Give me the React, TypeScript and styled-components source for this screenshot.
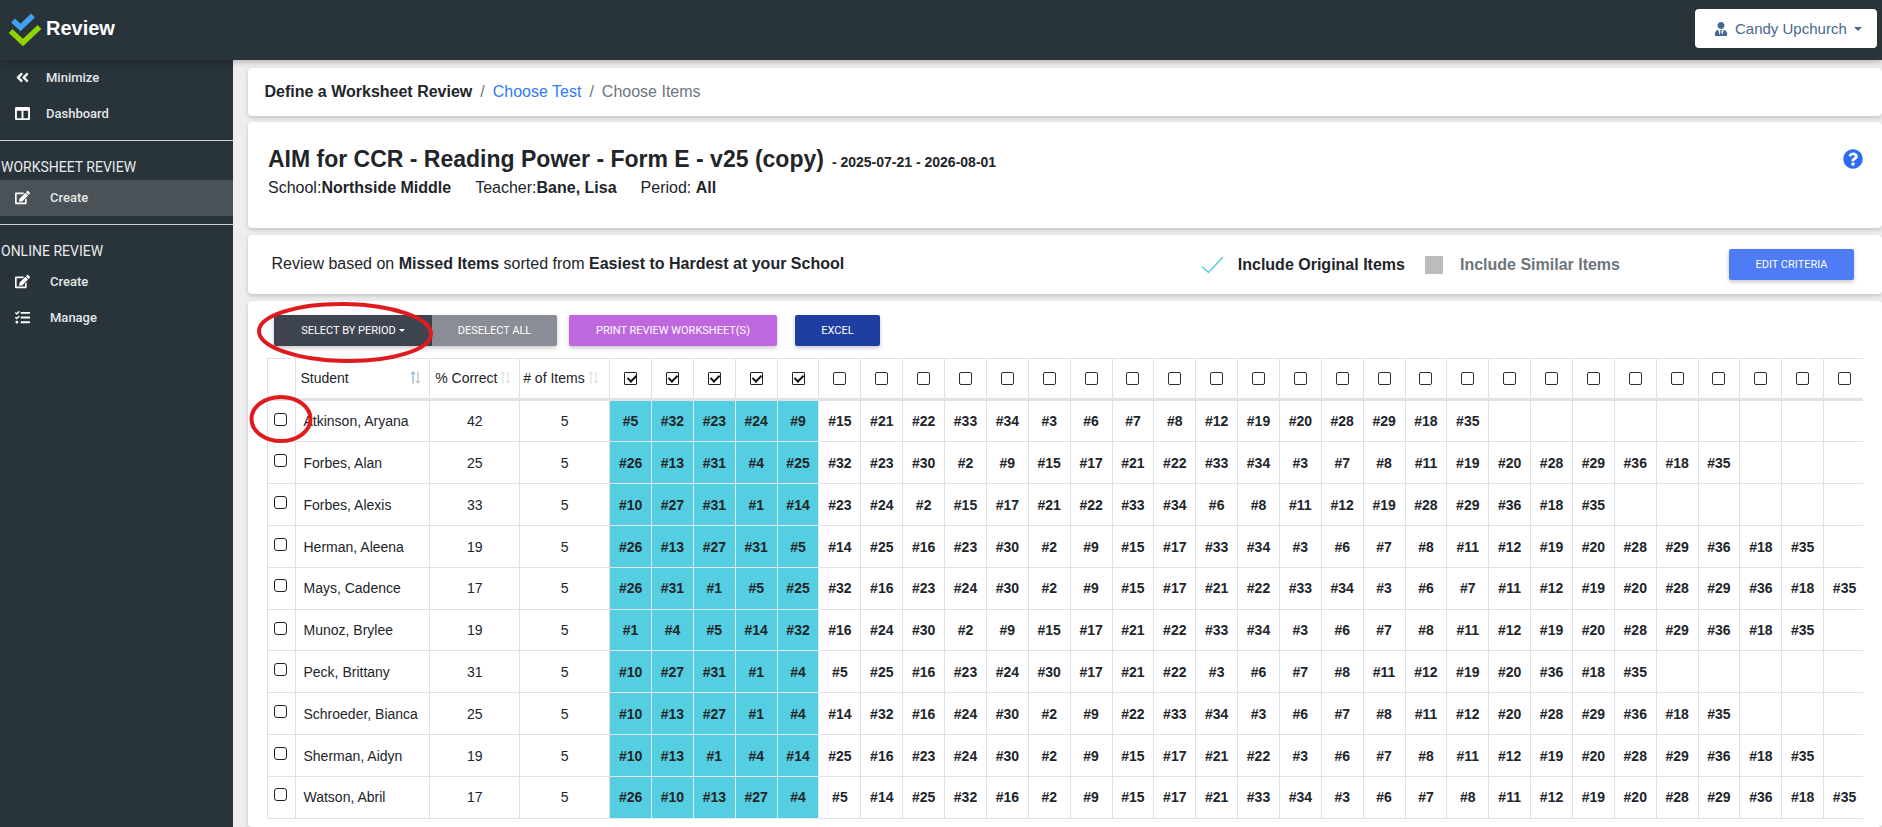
import React from "react";
import styled, { createGlobalStyle } from "styled-components";
import { FaAngleDoubleLeft, FaColumns, FaEdit, FaTasks, FaUserTie, FaQuestionCircle } from "react-icons/fa";

const Global = createGlobalStyle`
  html, body { margin: 0; height: 100%; overflow: hidden; background: #eeeeee; }
  body { font-family: "Liberation Sans", Arial, sans-serif; color: #212529; }
  * { box-sizing: border-box; }
`;

const Page = styled.div`
  display: flex;
  flex-direction: column;
  height: 100vh;
`;
const Header = styled.header`
  flex: 0 0 60px;
  background: #29333a;
  display: flex;
  align-items: center;
  justify-content: space-between;
  padding: 0 5px 3px 9px;
  box-shadow: 0 2px 6px rgba(0, 0, 0, 0.25);
  position: relative;
  z-index: 2;
`;
const Brand = styled.div`
  display: flex;
  align-items: center;
  gap: 4px;
  color: #fff;
  font-size: 20px;
  font-weight: 700;
`;
const UserButton = styled.button`
  width: 182px;
  height: 39px;
  background: #fff;
  border: 0;
  border-radius: 4px;
  color: #46698f;
  font: 15px "Liberation Sans", Arial, sans-serif;
  display: flex;
  align-items: center;
  padding: 0 0 0 19px;
  gap: 7px;
`;
const Caret = styled.span<{ $w?: number }>`
  display: inline-block;
  width: 0;
  height: 0;
  border-left: ${(p) => p.$w ?? 4}px solid transparent;
  border-right: ${(p) => p.$w ?? 4}px solid transparent;
  border-top: ${(p) => p.$w ?? 4}px solid currentColor;
`;
const Body = styled.div`
  flex: 1;
  display: flex;
  min-height: 0;
`;
const Sidebar = styled.nav`
  flex: 0 0 233px;
  background: #29333a;
  color: #e4e7e9;
  font-family: Roboto, "Liberation Sans", sans-serif;
  font-size: 13px;
  font-weight: 500;
`;
const NavItem = styled.div<{ $active?: boolean; $textLeft?: number }>`
  height: 36px;
  display: flex;
  align-items: center;
  padding: 0 0 2px 15px;
  background: ${(p) => (p.$active ? "#4a5258" : "transparent")};
  svg { width: 15px; height: 15px; color: #fff; flex: none; }
  span { margin-left: ${(p) => p.$textLeft ?? 16}px; }
`;
const NavRule = styled.hr`
  border: 0;
  border-top: 1px solid #c9cdd0;
  margin: 8px 0 0;
`;
const NavTitle = styled.div`
  height: 39px;
  padding: 12px 0 0 1px;
  font-size: 14px;
  font-weight: 400;
  display: flex;
  align-items: center;
  color: #e8eaec;
`;
const Main = styled.main`
  flex: 1;
  min-width: 0;
  padding: 8px 0 0 15px;
  display: flex;
  flex-direction: column;
  position: relative;
`;
const Card = styled.section<{ $h?: number; $mb?: number }>`
  background: #fff;
  border-radius: 4px;
  box-shadow: 0 2px 4px rgba(0, 0, 0, 0.18);
  ${(p) => (p.$h ? `flex: 0 0 ${p.$h}px;` : "flex: 1; min-height: 0;")}
  margin-bottom: ${(p) => p.$mb ?? 0}px;
`;
const Crumbs = styled(Card)`
  display: flex;
  align-items: center;
  padding-left: 16.5px;
  font-size: 16px;
  padding-bottom: 1px;
`;
const CrumbStrong = styled.b`
  font-weight: 700;
  color: #212529;
`;
const CrumbSep = styled.span`
  color: #6c757d;
  margin: 0 8px;
`;
const CrumbLink = styled.span`
  color: #2f7bf6;
`;
const CrumbMuted = styled.span`
  color: #6c757d;
`;
const TitleCard = styled(Card)`
  display: flex;
  justify-content: space-between;
  align-items: flex-start;
  padding: 24px 19px 0 20px;
`;
const TitleRow = styled.div`
  display: flex;
  align-items: baseline;
  gap: 8px;
  line-height: 26px;
`;
const PageTitle = styled.h1`
  margin: 0;
  font-size: 23px;
  font-weight: 700;
`;
const DateRange = styled.span`
  font-size: 14px;
  font-weight: 700;
`;
const MetaRow = styled.div`
  display: flex;
  gap: 24px;
  margin-top: 3px;
  font-size: 16px;
  line-height: 20px;
`;
const Help = styled.div`
  color: #2a6bf2;
  font-size: 20px;
  margin-top: 3px;
  line-height: 0;
`;
const CriteriaCard = styled(Card)`
  display: flex;
  align-items: center;
  padding: 0 28px 0 23.5px;
  font-size: 16px;
`;
const CriteriaText = styled.div`
  flex: 1;
  margin-bottom: 2px;
`;
const Include = styled.div<{ $muted?: boolean; $gap: number; $mr: number }>`
  display: flex;
  align-items: center;
  gap: ${(p) => p.$gap}px;
  margin-right: ${(p) => p.$mr}px;
  font-weight: 700;
  color: ${(p) => (p.$muted ? "#6c757d" : "#212529")};
`;
const GraySquare = styled.span`
  width: 18px;
  height: 18px;
  background: #bcbcbc;
`;
const ActionButton = styled.button<{ $bg: string; $w: number; $mr?: number; $radius?: string }>`
  width: ${(p) => p.$w}px;
  height: 31px;
  margin-right: ${(p) => p.$mr ?? 0}px;
  border: 0;
  border-radius: ${(p) => p.$radius ?? "2px"};
  background: ${(p) => p.$bg};
  color: #fff;
  font: 400 11px Roboto, "Liberation Sans", sans-serif;
  text-transform: uppercase;
  box-shadow: 0 2px 4px rgba(0, 0, 0, 0.22);
  display: inline-flex;
  align-items: center;
  justify-content: center;
  gap: 3px;
  padding: 0;
`;
const TableCard = styled(Card)`
  padding: 14px 0 0 19px;
  overflow: hidden;
`;
const Toolbar = styled.div`
  display: flex;
  padding-left: 7px;
  height: 31px;
  margin-bottom: 12px;
`;
const TableClip = styled.div`
  width: 1596px;
  overflow: hidden;
`;
const Grid = styled.table`
  table-layout: fixed;
  border-collapse: collapse;
  width: 1598.5px;
  font-size: 14px;
`;
const HeadCell = styled.th<{ $align?: string }>`
  height: 41px;
  padding: 0 0 2px ${(p) => (p.$align === "left" ? "5px" : "0")};
  border: 1px solid #dee2e6;
  border-bottom: 3px solid #dee2e6;
  font-weight: 400;
  text-align: ${(p) => p.$align ?? "center"};
  white-space: nowrap;
  overflow: hidden;
`;
const HeadInner = styled.div<{ $left: number; $right?: number; $spread?: boolean }>`
  display: flex;
  align-items: center;
  gap: 3px;
  justify-content: ${(p) => (p.$spread ? "space-between" : "flex-start")};
  padding: 0 ${(p) => p.$right ?? 0}px 0 ${(p) => p.$left}px;
`;
const Cell = styled.td<{ $align?: string; $kind?: "item" | "picked" }>`
  padding: 0;
  border: 1px solid ${(p) => (p.$kind === "picked" ? "#dcecf0" : "#dee2e6")};
  background: ${(p) => (p.$kind === "picked" ? "#54cee0" : "transparent")};
  font-weight: ${(p) => (p.$kind ? 700 : 400)};
  text-align: ${(p) => p.$align ?? "center"};
  white-space: nowrap;
`;
const NameCell = styled(Cell)`
  padding-left: 8px;
`;
const Row = styled.tr<{ $short?: boolean; $lift?: boolean }>`
  & > td {
    height: ${(p) => (p.$short ? 41 : 42)}px;
    padding-bottom: ${(p) => (p.$lift ? 2 : 0)}px;
  }
`;
const Box = styled.input`
  appearance: none;
  margin: 0;
  width: 13px;
  height: 13px;
  vertical-align: middle;
  border: 1.5px solid #2c2f34;
  border-radius: 2px;
  background: #fff;
  position: relative;
  &:checked {
    border-color: #1f2226;
    border-radius: 1px;
  }
  &:checked::after {
    content: "";
    position: absolute;
    left: 3.5px;
    top: 0;
    width: 4px;
    height: 7px;
    border: solid #111;
    border-width: 0 2px 2px 0;
    transform: rotate(45deg);
  }
`;
const RowBox = styled(Box)`
  top: -3px;
  left: -1px;
  border-width: 1px;
  border-color: #222;
  border-radius: 3px;
`;
const Annotation = styled.svg`
  position: absolute;
  left: 0;
  top: 0;
  pointer-events: none;
  overflow: visible;
  width: 100%;
  height: 100%;
`;

const Logo = () => (
  <svg width="33" height="34" viewBox="0 0 33 34" aria-hidden="true">
    <path d="M4 8.5l7.5 7L24 3.5" fill="none" stroke="#42a0f5" strokeWidth="5.5" strokeLinejoin="miter" />
    <path d="M1.5 19l12.5 11.5L30.5 15" fill="none" stroke="#8fd400" strokeWidth="5.5" strokeLinejoin="miter" />
  </svg>
);

const Tick = () => (
  <svg width="23" height="18" viewBox="0 0 23 18" aria-hidden="true">
    <path d="M1 10.5l6.5 6L22 1" fill="none" stroke="#54cee0" strokeWidth="1.5" />
  </svg>
);

const SortIcon = ({ active }: { active?: boolean }) => (
  <svg width="11" height="13" viewBox="0 0 11 13" aria-hidden="true" style={{ flex: "none" }}>
    <path d="M3 12.5V1M1 3.2L3 .8l2 2.4" fill="none" stroke={active ? "#5aa7cf" : "#d6d9dc"} strokeWidth="1" />
    <path d="M8 .5V12M6 9.8l2 2.4 2-2.4" fill="none" stroke={active ? "#a9b0b5" : "#d6d9dc"} strokeWidth="1" />
  </svg>
);

const students: { name: string; pct: number; items: number[]; short?: boolean; lift?: boolean }[] = [
  { name: "Atkinson, Aryana", pct: 42, items: [5, 32, 23, 24, 9, 15, 21, 22, 33, 34, 3, 6, 7, 8, 12, 19, 20, 28, 29, 18, 35] },
  { name: "Forbes, Alan", pct: 25, items: [26, 13, 31, 4, 25, 32, 23, 30, 2, 9, 15, 17, 21, 22, 33, 34, 3, 7, 8, 11, 19, 20, 28, 29, 36, 18, 35] },
  { name: "Forbes, Alexis", pct: 33, items: [10, 27, 31, 1, 14, 23, 24, 2, 15, 17, 21, 22, 33, 34, 6, 8, 11, 12, 19, 28, 29, 36, 18, 35] },
  { name: "Herman, Aleena", pct: 19, items: [26, 13, 27, 31, 5, 14, 25, 16, 23, 30, 2, 9, 15, 17, 33, 34, 3, 6, 7, 8, 11, 12, 19, 20, 28, 29, 36, 18, 35] },
  { name: "Mays, Cadence", pct: 17, lift: true, items: [26, 31, 1, 5, 25, 32, 16, 23, 24, 30, 2, 9, 15, 17, 21, 22, 33, 34, 3, 6, 7, 11, 12, 19, 20, 28, 29, 36, 18, 35] },
  { name: "Munoz, Brylee", pct: 19, short: true, items: [1, 4, 5, 14, 32, 16, 24, 30, 2, 9, 15, 17, 21, 22, 33, 34, 3, 6, 7, 8, 11, 12, 19, 20, 28, 29, 36, 18, 35] },
  { name: "Peck, Brittany", pct: 31, items: [10, 27, 31, 1, 4, 5, 25, 16, 23, 24, 30, 17, 21, 22, 3, 6, 7, 8, 11, 12, 19, 20, 36, 18, 35] },
  { name: "Schroeder, Bianca", pct: 25, items: [10, 13, 27, 1, 4, 14, 32, 16, 24, 30, 2, 9, 22, 33, 34, 3, 6, 7, 8, 11, 12, 20, 28, 29, 36, 18, 35] },
  { name: "Sherman, Aidyn", pct: 19, items: [10, 13, 1, 4, 14, 25, 16, 23, 24, 30, 2, 9, 15, 17, 21, 22, 3, 6, 7, 8, 11, 12, 19, 20, 28, 29, 36, 18, 35] },
  { name: "Watson, Abril", pct: 17, lift: true, items: [26, 10, 13, 27, 4, 5, 14, 25, 32, 16, 2, 9, 15, 17, 21, 33, 34, 3, 6, 7, 8, 11, 12, 19, 20, 28, 29, 36, 18, 35] },
];
const ITEM_COLS = Array.from({ length: 30 }, (_, i) => i);

export default function App() {
  return (
    <Page>
      <Global />
      <Header>
        <Brand>
          <Logo />
          Review
        </Brand>
        <UserButton>
          <FaUserTie size={14} />
          Candy Upchurch
          <Caret />
        </UserButton>
      </Header>
      <Body>
        <Sidebar>
          <NavItem><FaAngleDoubleLeft /><span>Minimize</span></NavItem>
          <NavItem><FaColumns /><span>Dashboard</span></NavItem>
          <NavRule />
          <NavTitle>WORKSHEET REVIEW</NavTitle>
          <NavItem $active $textLeft={20}><FaEdit /><span>Create</span></NavItem>
          <NavRule />
          <NavTitle>ONLINE REVIEW</NavTitle>
          <NavItem $textLeft={20}><FaEdit /><span>Create</span></NavItem>
          <NavItem $textLeft={20}><FaTasks /><span>Manage</span></NavItem>
        </Sidebar>
        <Main>
          <Crumbs $h={48} $mb={6}>
            <CrumbStrong>Define a Worksheet Review</CrumbStrong>
            <CrumbSep>/</CrumbSep>
            <CrumbLink>Choose Test</CrumbLink>
            <CrumbSep>/</CrumbSep>
            <CrumbMuted>Choose Items</CrumbMuted>
          </Crumbs>
          <TitleCard $h={106} $mb={7}>
            <div>
              <TitleRow>
                <PageTitle>AIM for CCR - Reading Power - Form E - v25 (copy)</PageTitle>
                <DateRange>- 2025-07-21 - 2026-08-01</DateRange>
              </TitleRow>
              <MetaRow>
                <span>School:<b>Northside Middle</b></span>
                <span>Teacher:<b>Bane, Lisa</b></span>
                <span>Period: <b>All</b></span>
              </MetaRow>
            </div>
            <Help><FaQuestionCircle /></Help>
          </TitleCard>
          <CriteriaCard $h={59} $mb={7}>
            <CriteriaText>
              Review based on <b>Missed Items</b> sorted from <b>Easiest to Hardest at your School</b>
            </CriteriaText>
            <Include $gap={14} $mr={20}><Tick />Include Original Items</Include>
            <Include $muted $gap={17} $mr={109}><GraySquare />Include Similar Items</Include>
            <ActionButton $bg="#4d7cf6" $w={125}>Edit Criteria</ActionButton>
          </CriteriaCard>
          <TableCard>
            <Toolbar>
              <ActionButton $bg="#3f4451" $w={158} $radius="2px 0 0 2px">Select by Period <Caret $w={3} /></ActionButton>
              <ActionButton $bg="#8a8d95" $w={125} $mr={12} $radius="0 2px 2px 0">Deselect All</ActionButton>
              <ActionButton $bg="#bf67de" $w={208} $mr={18}>Print Review Worksheet(s)</ActionButton>
              <ActionButton $bg="#1e3ea1" $w={85}>Excel</ActionButton>
            </Toolbar>
            <TableClip>
              <Grid>
                <colgroup>
                  <col style={{ width: 27.5 }} />
                  <col style={{ width: 134.7 }} />
                  <col style={{ width: 90 }} />
                  <col style={{ width: 90 }} />
                  {ITEM_COLS.map((i) => <col key={i} style={{ width: 41.86 }} />)}
                </colgroup>
                <thead>
                  <tr>
                    <HeadCell />
                    <HeadCell $align="left"><HeadInner $left={0} $right={8} $spread>Student<SortIcon active /></HeadInner></HeadCell>
                    <HeadCell><HeadInner $left={5}>% Correct<SortIcon /></HeadInner></HeadCell>
                    <HeadCell><HeadInner $left={3}># of Items<SortIcon /></HeadInner></HeadCell>
                    {ITEM_COLS.map((i) => (
                      <HeadCell key={i}><Box type="checkbox" defaultChecked={i < 5} /></HeadCell>
                    ))}
                  </tr>
                </thead>
                <tbody>
                  {students.map((s) => (
                    <Row key={s.name} $short={s.short} $lift={s.lift}>
                      <Cell><RowBox type="checkbox" /></Cell>
                      <NameCell $align="left">{s.name}</NameCell>
                      <Cell>{s.pct}</Cell>
                      <Cell>5</Cell>
                      {ITEM_COLS.map((i) => (
                        s.items[i] !== undefined
                          ? <Cell key={i} $kind={i < 5 ? "picked" : "item"}>#{s.items[i]}</Cell>
                          : <Cell key={i} />
                      ))}
                    </Row>
                  ))}
                </tbody>
              </Grid>
            </TableClip>
          </TableCard>
          <Annotation aria-hidden="true">
            <ellipse cx="112" cy="272.5" rx="86" ry="28.5" transform="rotate(1 112 272.5)" fill="none" stroke="#e01b1f" strokeWidth="4" />
            <ellipse cx="48" cy="359" rx="29.5" ry="22" fill="none" stroke="#e01b1f" strokeWidth="4" />
          </Annotation>
        </Main>
      </Body>
    </Page>
  );
}
